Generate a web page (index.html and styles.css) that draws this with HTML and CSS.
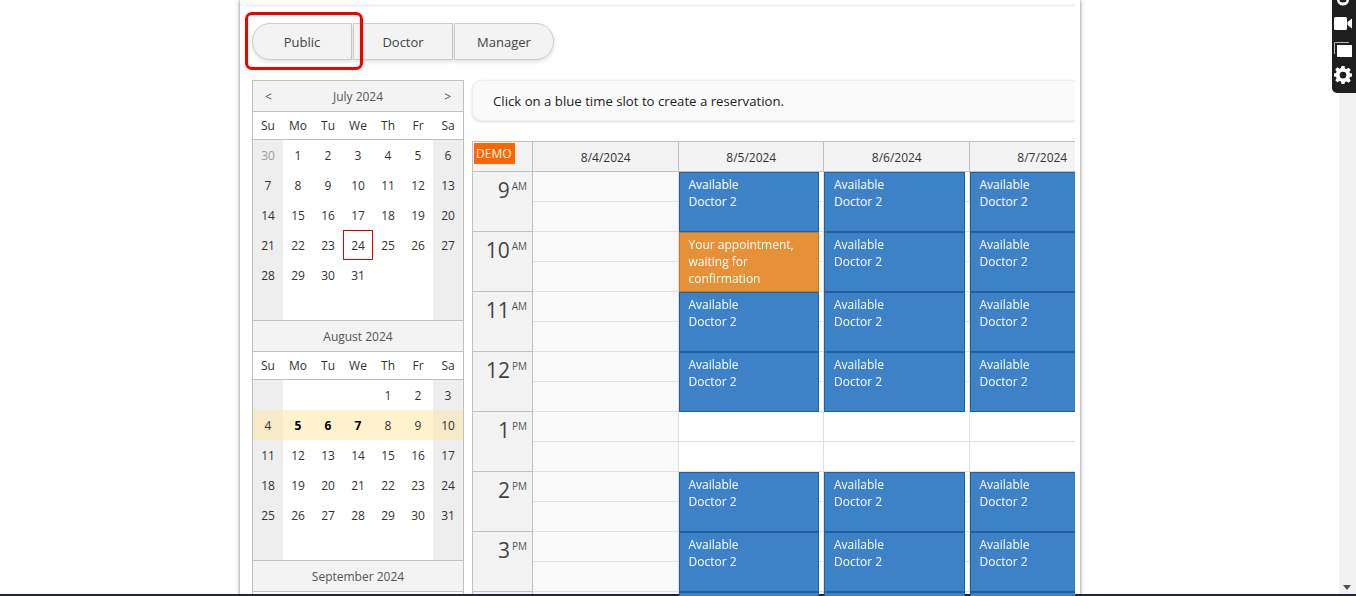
FILE: index.html
```html
<!DOCTYPE html>
<html lang="en">
<head>
    <meta charset="UTF-8">
    <title>Reservations</title>
    <link rel="stylesheet" href="styles.css">
</head>
<body>

    <div class="page">
        <div class="top-rule"></div>

        <!-- Role tabs -->
        <div class="tabs">
            <button class="tab tab-first">Public</button>
            <button class="tab">Doctor</button>
            <button class="tab tab-last">Manager</button>
        </div>
        <div class="tab-highlight"></div>

        <div class="main">
            <!-- Month navigator -->
            <div class="nav">
                <div class="month">
                    <div class="month-title"><span>&lt;</span><b>July 2024</b><span>&gt;</span></div>
                    <div class="week-names"><i>Su</i><i>Mo</i><i>Tu</i><i>We</i><i>Th</i><i>Fr</i><i>Sa</i></div>
                    <div class="days">
                        <i class="we other">30</i><i>1</i><i>2</i><i>3</i><i>4</i><i>5</i><i class="we">6</i>
                        <i class="we">7</i><i>8</i><i>9</i><i>10</i><i>11</i><i>12</i><i class="we">13</i>
                        <i class="we">14</i><i>15</i><i>16</i><i>17</i><i>18</i><i>19</i><i class="we">20</i>
                        <i class="we">21</i><i>22</i><i>23</i><i class="today">24</i><i>25</i><i>26</i><i class="we">27</i>
                        <i class="we">28</i><i>29</i><i>30</i><i>31</i><i></i><i></i><i class="we"></i>
                        <i class="we"></i><i></i><i></i><i></i><i></i><i></i><i class="we"></i>
                    </div>
                </div>
                <div class="month">
                    <div class="month-title"><b>August 2024</b></div>
                    <div class="week-names"><i>Su</i><i>Mo</i><i>Tu</i><i>We</i><i>Th</i><i>Fr</i><i>Sa</i></div>
                    <div class="days">
                        <i class="we"></i><i></i><i></i><i></i><i>1</i><i>2</i><i class="we">3</i>
                        <i class="we sel">4</i><i class="sel busy">5</i><i class="sel busy">6</i><i class="sel busy">7</i><i class="sel">8</i><i class="sel">9</i><i class="we sel">10</i>
                        <i class="we">11</i><i>12</i><i>13</i><i>14</i><i>15</i><i>16</i><i class="we">17</i>
                        <i class="we">18</i><i>19</i><i>20</i><i>21</i><i>22</i><i>23</i><i class="we">24</i>
                        <i class="we">25</i><i>26</i><i>27</i><i>28</i><i>29</i><i>30</i><i class="we">31</i>
                        <i class="we"></i><i></i><i></i><i></i><i></i><i></i><i class="we"></i>
                    </div>
                </div>
                <div class="month">
                    <div class="month-title"><b>September 2024</b></div>
                </div>
            </div>

            <div class="content">
                <div class="message">Click on a blue time slot to create a reservation.</div>

                <!-- Week calendar -->
                <div class="calendar">
                    <div class="time-col">
                        <div class="corner"><span class="demo">DEMO</span></div>
                        <div class="hour-label">9<sup>AM</sup></div>
                        <div class="hour-label">10<sup>AM</sup></div>
                        <div class="hour-label">11<sup>AM</sup></div>
                        <div class="hour-label">12<sup>PM</sup></div>
                        <div class="hour-label">1<sup>PM</sup></div>
                        <div class="hour-label">2<sup>PM</sup></div>
                        <div class="hour-label">3<sup>PM</sup></div>
                        <div class="hour-label"></div>
                    </div>

                    <div class="day-col off">
                        <div class="day-head">8/4/2024</div>
                        <div class="hour"></div>
                        <div class="hour"></div>
                        <div class="hour"></div>
                        <div class="hour"></div>
                        <div class="hour"></div>
                        <div class="hour"></div>
                        <div class="hour"></div>
                        <div class="hour"></div>
                    </div>

                    <div class="day-col">
                        <div class="day-head">8/5/2024</div>
                        <div class="hour"><div class="event">Available<br>Doctor 2</div></div>
                        <div class="hour"><div class="event pending">Your appointment, waiting for confirmation</div></div>
                        <div class="hour"><div class="event">Available<br>Doctor 2</div></div>
                        <div class="hour"><div class="event">Available<br>Doctor 2</div></div>
                        <div class="hour"></div>
                        <div class="hour"><div class="event">Available<br>Doctor 2</div></div>
                        <div class="hour"><div class="event">Available<br>Doctor 2</div></div>
                        <div class="hour"><div class="event"></div></div>
                    </div>

                    <div class="day-col">
                        <div class="day-head">8/6/2024</div>
                        <div class="hour"><div class="event">Available<br>Doctor 2</div></div>
                        <div class="hour"><div class="event">Available<br>Doctor 2</div></div>
                        <div class="hour"><div class="event">Available<br>Doctor 2</div></div>
                        <div class="hour"><div class="event">Available<br>Doctor 2</div></div>
                        <div class="hour"></div>
                        <div class="hour"><div class="event">Available<br>Doctor 2</div></div>
                        <div class="hour"><div class="event">Available<br>Doctor 2</div></div>
                        <div class="hour"><div class="event"></div></div>
                    </div>

                    <div class="day-col">
                        <div class="day-head">8/7/2024</div>
                        <div class="hour"><div class="event">Available<br>Doctor 2</div></div>
                        <div class="hour"><div class="event">Available<br>Doctor 2</div></div>
                        <div class="hour"><div class="event">Available<br>Doctor 2</div></div>
                        <div class="hour"><div class="event">Available<br>Doctor 2</div></div>
                        <div class="hour"></div>
                        <div class="hour"><div class="event">Available<br>Doctor 2</div></div>
                        <div class="hour"><div class="event">Available<br>Doctor 2</div></div>
                        <div class="hour"><div class="event"></div></div>
                    </div>
                </div>
            </div>
        </div>
    </div>

    <!-- Browser scrollbar and capture toolbar, on top of the page -->
    <div class="scrollbar"><span class="scroll-arrow"></span></div>
    <div class="toolbar">
        <svg class="tool tool-camera" width="18" height="6" viewBox="0 0 18 6"><path d="M3 0a6 5.500 0 0 0 12 0h-2.500a3.500 2.500 0 0 1-7 0z" fill="#fff"/></svg>
        <svg class="tool tool-video" width="18" height="13" viewBox="0 0 18 13"><rect x="0" y="0" width="13" height="13" rx="1.500" fill="#fff"/><path d="M13.500 5 18 1.500v10L13.500 8z" fill="#fff"/></svg>
        <svg class="tool tool-windows" width="18" height="15" viewBox="0 0 18 15"><path d="M.500 12V.500H15" fill="none" stroke="#bbb"/><rect x="3" y="3" width="15" height="12" fill="#fff"/></svg>
        <svg class="tool tool-gear" width="18" height="18" viewBox="0 0 24 24"><path fill="#fff" fill-rule="evenodd" d="M10 0h4l.7 3.200 2 .8 2.800-1.800 2.800 2.800L20.500 7.800l.8 2L24 10v4l-2.700.7-.8 2 1.800 2.800-2.800 2.800-2.800-1.800-2 .8L14 24h-4l-.7-3.200-2-.8-2.800 1.800-2.800-2.800L3.500 16.200l-.8-2L0 14v-4l2.700-.7.8-2L1.700 4.500 4.500 1.700 7.300 3.500l2-.8zM12 7.500a4.500 4.500 0 1 0 0 9 4.500 4.500 0 0 0 0-9z"/></svg>
    </div>
    <div class="bottom-line"></div>

</body>
</html>
```

FILE: styles.css
```css
* {
    box-sizing: border-box;
}

html, body {
    height: 100%;
}

body {
    margin: 0;
    background: #ffffff;
    font-family: "Open Sans", "Noto Sans", sans-serif;
    font-size: 12px;
    color: #333;
    overflow: hidden;
}

.page {
    position: relative;
    width: 840px;
    height: 596px;
    margin-left: 240px;
    padding: 4px 5px 0 5px;
    background: #fff;
    overflow: hidden;
    box-shadow: 0 0 4px rgba(0, 0, 0, 0.55);
}

.top-rule {
    height: 3px;
    background: #f3f3f3;
}

/* tabs */
.tabs {
    display: flex;
    gap: 1px;
    margin: 16px 0 20px 7px;
    height: 37px;
}

.tab {
    width: 100px;
    height: 37px;
    padding: 0;
    font: inherit;
    font-size: 13px;
    color: #444;
    background: #f3f3f3;
    border: 1px solid #ccc;
    box-shadow: 0 2px 4px rgba(0, 0, 0, 0.12);
}

.tab-first {
    border-radius: 18px 0 0 18px;
}

.tab-last {
    border-radius: 0 18px 18px 0;
}

.tab-highlight {
    position: absolute;
    left: 5px;
    top: 12px;
    width: 118px;
    height: 58px;
    border: 3px solid #f00000;
    border-radius: 7px;
}

.main {
    display: flex;
    gap: 8px;
    padding-left: 7px;
}

/* month navigator */
.nav {
    width: 212px;
    flex: none;
    border: 1px solid #c0c0c0;
    border-bottom: 0;
}

.month-title {
    display: flex;
    justify-content: space-between;
    align-items: center;
    height: 31px;
    padding: 0 12px;
    background: #f3f3f3;
    border-bottom: 1px solid #c0c0c0;
    color: #555;
}

.month-title b {
    flex: 1;
    font-weight: 400;
    text-align: center;
}

.week-names, .days {
    display: grid;
    grid-template-columns: repeat(7, 30px);
}

.week-names {
    height: 28px;
    border-bottom: 1px solid #c0c0c0;
}

.week-names i, .days i {
    display: flex;
    align-items: center;
    justify-content: center;
    font-style: normal;
    color: #333;
}

.days {
    grid-auto-rows: 30px;
    border-bottom: 1px solid #c0c0c0;
}

.days .we {
    background: #eeeeee;
}

.days .other {
    color: #999;
}

.days .sel {
    background: #fff2cc;
}

.days .we.sel {
    background: #f5ebc8;
}

.days .busy {
    font-weight: 700;
    color: #000;
}

.days .today {
    border: 1px solid #e00000;
}

/* right side */
.content {
    flex: 1;
    min-width: 0;
}

.message {
    height: 41px;
    margin-bottom: 20px;
    padding: 0 20px;
    line-height: 40px;
    font-size: 13.2px;
    color: #222;
    background: #fafafa;
    border: 1px solid #eee;
    border-right: 0;
    border-radius: 10px 0 0 10px;
    box-shadow: 0 1px 3px rgba(0, 0, 0, 0.15);
    clip-path: inset(-4px 0 -4px -4px);
}

.calendar {
    display: flex;
    overflow: hidden;
    border-top: 1px solid #c0c0c0;
}

.time-col {
    width: 61px;
    flex: none;
    background: #f3f3f3;
    border-left: 1px solid #c0c0c0;
    border-right: 1px solid #c0c0c0;
}

.corner {
    position: relative;
    height: 30px;
    border-bottom: 1px solid #c0c0c0;
}

.demo {
    position: absolute;
    left: 1px;
    top: 1px;
    padding: 0 3px 0 2px;
    line-height: 21px;
    color: #fff;
    background: #ff6600;
}

.hour-label {
    height: 60px;
    padding: 2px 5px 0 0;
    text-align: right;
    font-size: 21px;
    line-height: 33px;
    color: #444;
    border-bottom: 1px solid #c0c0c0;
}

.hour-label sup {
    margin-left: 2px;
    font-size: 10px;
    line-height: 0;
    vertical-align: 8px;
    color: #555;
}

.day-col {
    width: 145.5px;
    flex: none;
    background: #fff;
}

.day-col.off {
    background: #f9f9f9;
}

.day-head {
    height: 30px;
    padding: 2px 0 0 1px;
    line-height: 28px;
    text-align: center;
    background: #f3f3f3;
    border-right: 1px solid #c0c0c0;
    border-bottom: 1px solid #c0c0c0;
}

.hour {
    position: relative;
    height: 60px;
    background: linear-gradient(#e0e0e0, #e0e0e0) 0 29px / 100% 1px no-repeat;
    border-right: 1px solid #e0e0e0;
    border-bottom: 1px solid #e0e0e0;
}

.event {
    position: absolute;
    left: 0;
    top: 0;
    width: 140.5px;
    height: 60px;
    padding: 3px 8px 3px 9px;
    line-height: 17px;
    color: #fff;
    background: #3d82c6;
    border: 1px solid #1f60a0;
    z-index: 1;
}

.event.pending {
    background: #e69138;
    border-color: #c47a20;
}

/* scrollbar and toolbar */
.scrollbar {
    position: fixed;
    right: 0;
    top: 0;
    width: 17px;
    height: 596px;
    background: #f1f1f1;
}

.scroll-arrow {
    position: absolute;
    left: 4px;
    bottom: 6px;
    border: 4px solid transparent;
    border-top: 5px solid #505050;
    border-bottom: 0;
}

.toolbar {
    position: fixed;
    right: 0;
    top: 0;
    width: 24px;
    height: 93px;
    display: flex;
    flex-direction: column;
    padding-left: 2px;
    background: #1f1f1f;
    border-radius: 0 0 0 5px;
}

.tool {
    flex: none;
}

.tool-video {
    margin-top: 11px;
}

.tool-windows {
    margin-top: 12px;
}

.tool-gear {
    margin-top: 9px;
}

.bottom-line {
    position: fixed;
    left: 0;
    right: 0;
    bottom: 0;
    height: 2px;
    background: #23233f;
}
```
